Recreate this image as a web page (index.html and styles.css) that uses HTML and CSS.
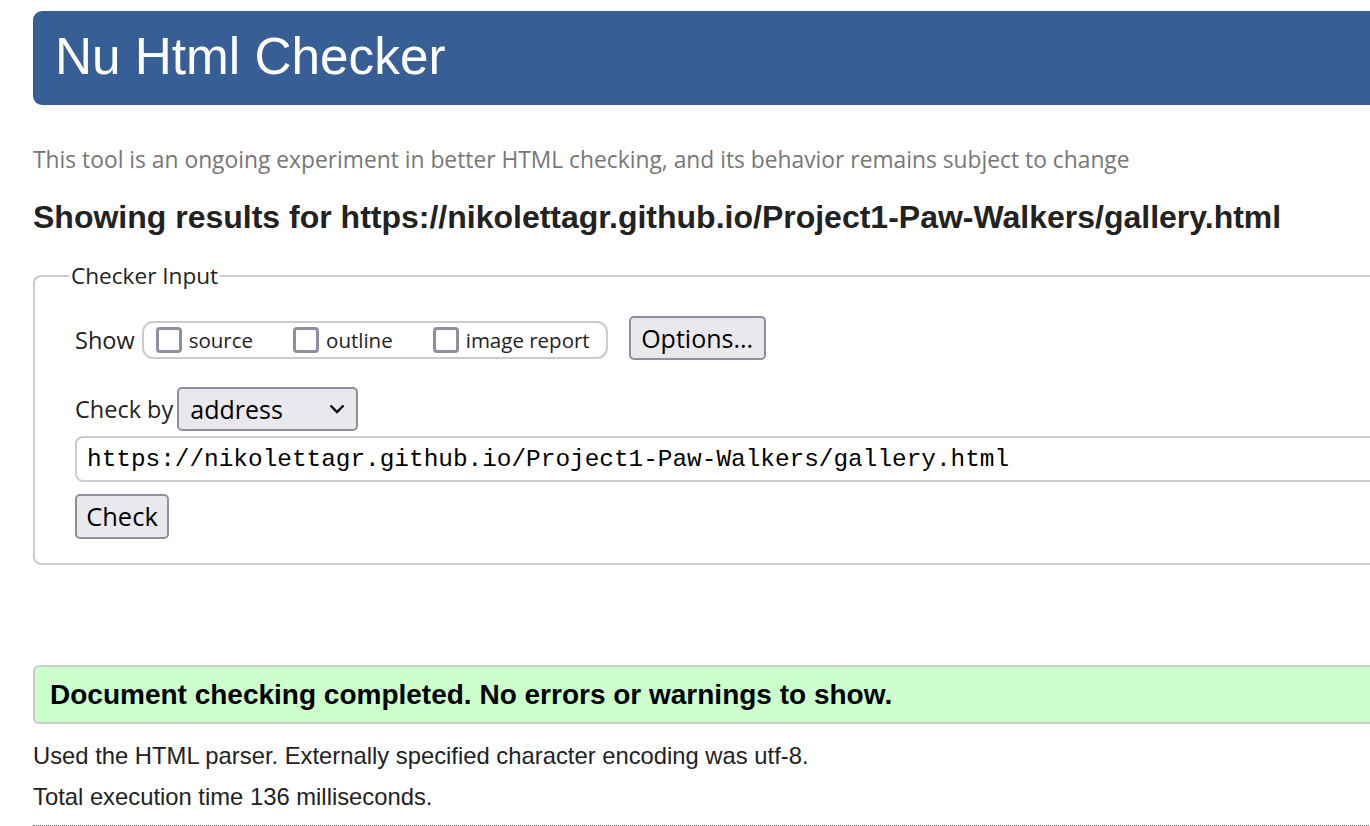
FILE: index.html
```html
<!DOCTYPE html>
<html lang="en">
<head>
<meta charset="utf-8">
<title>Nu Html Checker</title>
<link rel="stylesheet" href="styles.css">
</head>
<body>
<div class="page">
  <header class="banner"><h1>Nu Html Checker</h1></header>
  <p class="intro">This tool is an ongoing experiment in better HTML checking, and its behavior remains subject to change</p>
  <h2 class="results">Showing results for https://nikolettagr.github.io/Project1-Paw-Walkers/gallery.html</h2>
  <fieldset class="input">
    <legend>Checker Input</legend>
    <div class="row show-row">
      <span class="label">Show</span>
      <div class="pill">
        <label class="opt"><span class="box"></span>source</label>
        <label class="opt"><span class="box"></span>outline</label>
        <label class="opt"><span class="box"></span>image report</label>
      </div>
      <button class="btn options">Options...</button>
    </div>
    <div class="row by-row">
      <span class="label">Check by</span>
      <div class="select">address
        <svg class="chev" width="16" height="10" viewBox="0 0 16 10"><path d="M1.5 1.5 L8 8 L14.5 1.5" fill="none" stroke="#000" stroke-width="2.4"/></svg>
      </div>
    </div>
    <div class="url">https://nikolettagr.github.io/Project1-Paw-Walkers/gallery.html</div>
    <button class="btn check">Check</button>
  </fieldset>
  <div class="success">Document checking completed. No errors or warnings to show.</div>
  <p class="info used">Used the HTML parser. Externally specified character encoding was utf-8.</p>
  <p class="info total">Total execution time 136 milliseconds.</p>
  <hr class="dotted">
</div>
</body>
</html>
```

FILE: styles.css
```css
html, body { margin: 0; padding: 0; overflow: hidden; background: #fff; }
body { width: 1370px; height: 826px; }
.page {
  width: 1380px;
  margin-left: 33px;
  padding-top: 11px;
  font-family: "Liberation Sans", Arial, sans-serif;
  color: #222;
}
.banner {
  background: #385e96;
  height: 94px;
  border-radius: 9px 0 0 9px;
  display: flex;
  align-items: center;
  padding-left: 22px;
}
.banner h1 {
  margin: 0;
  color: #fff;
  font-weight: normal;
  font-size: 51.3px;
  line-height: 1;
  position: relative;
  top: -1px;
}
.intro {
  margin: 41px 0 0;
  font-family: "Open Sans", "Noto Sans", sans-serif;
  font-size: 22.8px;
  color: #777;
  line-height: 28px;
  white-space: nowrap;
}
.results {
  margin: 26px 0 0;
  font-size: 32px;
  font-weight: bold;
  line-height: 34px;
  color: #222;
  white-space: nowrap;
}
fieldset.input {
  margin: 30px 0 0;
  border: 2px solid #ccc;
  border-radius: 8px;
  padding: 0 0 24px 40px;
  font-family: "Open Sans", "Noto Sans", sans-serif;
}
fieldset.input legend {
  font-size: 22.6px;
  color: #222;
  padding: 0 2px;
  margin-left: -6px;
  line-height: 24px;
}
.row { display: flex; align-items: center; height: 44px; }
.label { font-size: 23.5px; color: #222; }
.show-row { margin-top: 30px; }
.pill {
  display: flex;
  align-items: center;
  border: 2px solid #ccc;
  border-radius: 11px;
  height: 38px;
  width: 466px;
  box-sizing: border-box;
  margin-left: 7px;
  padding-left: 12px;
}
.opt {
  display: flex;
  align-items: center;
  font-size: 20.5px;
  color: #222;
}
.opt + .opt { margin-left: 40px; }
.box {
  width: 26px;
  height: 26px;
  box-sizing: border-box;
  border: 3px solid #8f8f9d;
  border-radius: 4px;
  margin-right: 7px;
  background: #fff;
}
.btn {
  font-family: "Open Sans", "Noto Sans", sans-serif;
  background: #e9e9ed;
  border: 2px solid #8f8f9d;
  border-radius: 5px;
  color: #000;
  font-size: 25px;
  padding: 0;
  line-height: 1;
  cursor: pointer;
}
.options { margin-left: 21px; margin-bottom: 4px; width: 137px; height: 44px; }
.by-row { margin-top: 25px; }
.select {
  margin-left: 4px;
  display: flex;
  align-items: center;
  justify-content: space-between;
  background: #e9e9ed;
  border: 2px solid #8f8f9d;
  border-radius: 5px;
  height: 44px;
  width: 181px;
  box-sizing: border-box;
  padding: 0 11px 0 11px;
  font-size: 25px;
  color: #000;
}
.url {
  margin-top: 5px;
  height: 46px;
  box-sizing: border-box;
  border: 2px solid #ccc;
  border-right: none;
  border-radius: 8px 0 0 8px;
  font-family: "Liberation Mono", "DejaVu Sans Mono", monospace;
  font-size: 24.4px;
  color: #000;
  display: flex;
  align-items: center;
  padding-left: 10px;
  white-space: nowrap;
}
.check { margin-top: 12px; height: 45px; width: 94px; font-size: 25.5px; }
.success {
  margin-top: 100px;
  background: #ccffcc;
  border: 2px solid #ccc;
  border-right: none;
  border-radius: 6px 0 0 6px;
  height: 59px;
  box-sizing: border-box;
  display: flex;
  align-items: center;
  padding-left: 15px;
  font-weight: bold;
  font-size: 28px;
  color: #000;
  white-space: nowrap;
}
.info {
  margin: 0;
  font-size: 23.8px;
  line-height: 24px;
  color: #222;
  white-space: nowrap;
}
.used { margin-top: 20px; }
.total { margin-top: 17px; }
.dotted {
  margin: 16px 0 0;
  border: none;
  border-top: 1px dotted #777;
  height: 0;
}
```
